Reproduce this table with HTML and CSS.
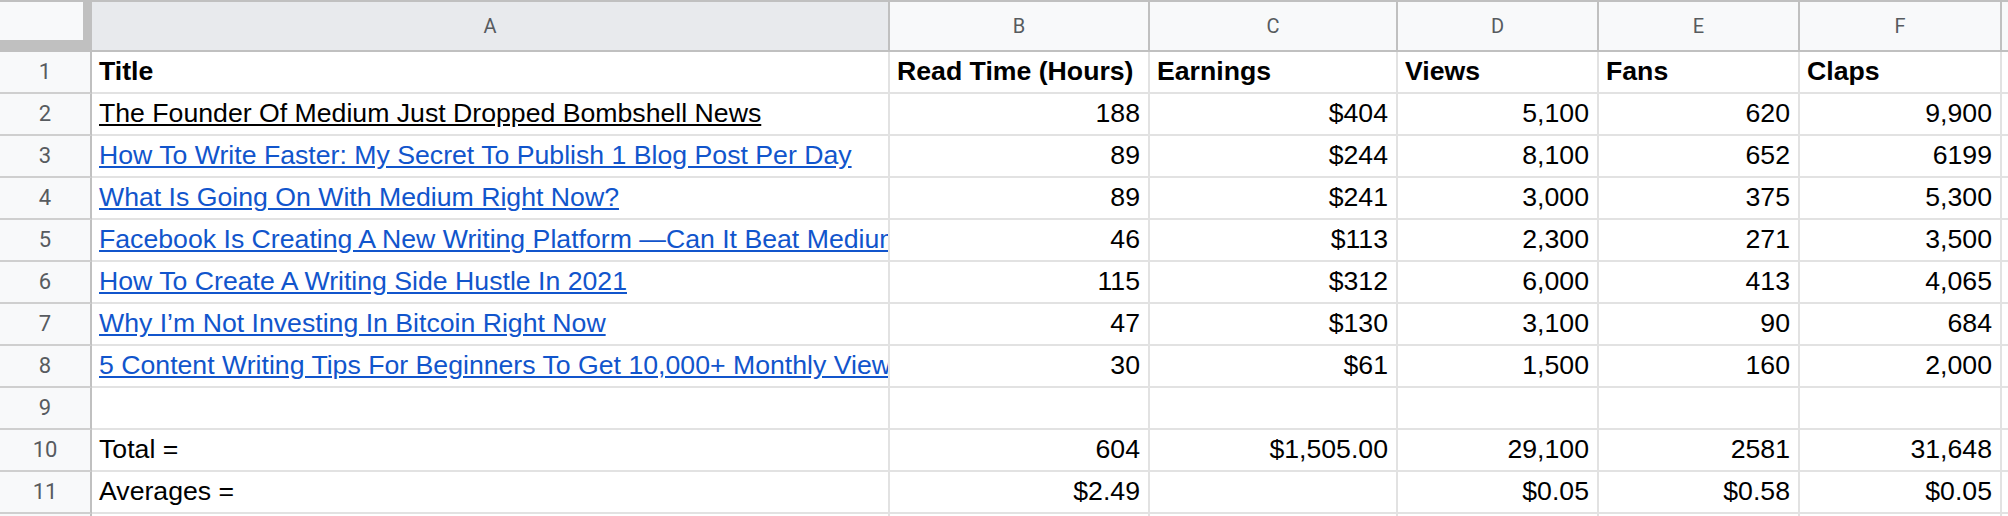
FILE: index.html
```html
<!DOCTYPE html>
<html>
<head>
<meta charset="utf-8">
<title>Sheet</title>
<link rel="stylesheet" href="styles.css">
</head>
<body>
<div class="sheet">
  <div class="corner"></div>
  <div class="colhead sel">A</div>
  <div class="colhead">B</div>
  <div class="colhead">C</div>
  <div class="colhead">D</div>
  <div class="colhead">E</div>
  <div class="colhead">F</div>
  <div class="colhead"></div>

  <div class="rowhead">1</div>
  <div class="cell bold">Title</div>
  <div class="cell bold">Read Time (Hours)</div>
  <div class="cell bold">Earnings</div>
  <div class="cell bold">Views</div>
  <div class="cell bold">Fans</div>
  <div class="cell bold">Claps</div>
  <div class="cell"></div>

  <div class="rowhead">2</div>
  <div class="cell"><a class="link dark" href="#">The Founder Of Medium Just Dropped Bombshell News</a></div>
  <div class="cell num">188</div>
  <div class="cell num">$404</div>
  <div class="cell num">5,100</div>
  <div class="cell num">620</div>
  <div class="cell num">9,900</div>
  <div class="cell"></div>

  <div class="rowhead">3</div>
  <div class="cell"><a class="link" href="#">How To Write Faster: My Secret To Publish 1 Blog Post Per Day</a></div>
  <div class="cell num">89</div>
  <div class="cell num">$244</div>
  <div class="cell num">8,100</div>
  <div class="cell num">652</div>
  <div class="cell num">6199</div>
  <div class="cell"></div>

  <div class="rowhead">4</div>
  <div class="cell"><a class="link" href="#">What Is Going On With Medium Right Now?</a></div>
  <div class="cell num">89</div>
  <div class="cell num">$241</div>
  <div class="cell num">3,000</div>
  <div class="cell num">375</div>
  <div class="cell num">5,300</div>
  <div class="cell"></div>

  <div class="rowhead">5</div>
  <div class="cell"><a class="link" href="#">Facebook Is Creating A New Writing Platform —Can It Beat Medium?</a></div>
  <div class="cell num">46</div>
  <div class="cell num">$113</div>
  <div class="cell num">2,300</div>
  <div class="cell num">271</div>
  <div class="cell num">3,500</div>
  <div class="cell"></div>

  <div class="rowhead">6</div>
  <div class="cell"><a class="link" href="#">How To Create A Writing Side Hustle In 2021</a></div>
  <div class="cell num">115</div>
  <div class="cell num">$312</div>
  <div class="cell num">6,000</div>
  <div class="cell num">413</div>
  <div class="cell num">4,065</div>
  <div class="cell"></div>

  <div class="rowhead">7</div>
  <div class="cell"><a class="link" href="#">Why I’m Not Investing In Bitcoin Right Now</a></div>
  <div class="cell num">47</div>
  <div class="cell num">$130</div>
  <div class="cell num">3,100</div>
  <div class="cell num">90</div>
  <div class="cell num">684</div>
  <div class="cell"></div>

  <div class="rowhead">8</div>
  <div class="cell"><a class="link" href="#">5 Content Writing Tips For Beginners To Get 10,000+ Monthly Views</a></div>
  <div class="cell num">30</div>
  <div class="cell num">$61</div>
  <div class="cell num">1,500</div>
  <div class="cell num">160</div>
  <div class="cell num">2,000</div>
  <div class="cell"></div>

  <div class="rowhead">9</div>
  <div class="cell"></div>
  <div class="cell"></div>
  <div class="cell"></div>
  <div class="cell"></div>
  <div class="cell"></div>
  <div class="cell"></div>
  <div class="cell"></div>

  <div class="rowhead">10</div>
  <div class="cell">Total =</div>
  <div class="cell num">604</div>
  <div class="cell num">$1,505.00</div>
  <div class="cell num">29,100</div>
  <div class="cell num">2581</div>
  <div class="cell num">31,648</div>
  <div class="cell"></div>

  <div class="rowhead">11</div>
  <div class="cell">Averages =</div>
  <div class="cell num">$2.49</div>
  <div class="cell num"></div>
  <div class="cell num">$0.05</div>
  <div class="cell num">$0.58</div>
  <div class="cell num">$0.05</div>
  <div class="cell"></div>

  <div class="rowhead"></div>
  <div class="cell"></div>
  <div class="cell"></div>
  <div class="cell"></div>
  <div class="cell"></div>
  <div class="cell"></div>
  <div class="cell"></div>
  <div class="cell"></div>
</div>
</body>
</html>
```

FILE: styles.css
```css
html, body {
  margin: 0;
  padding: 0;
  background: #ffffff;
  overflow: hidden;
}

.sheet {
  display: grid;
  grid-template-columns: 92px 798px 260px 248px 201px 201px 202px 1fr;
  grid-template-rows: 52px repeat(12, 42px);
  width: 2008px;
  height: 516px;
  overflow: hidden;
  font-family: "Liberation Sans", Arial, sans-serif;
}

.sheet > div {
  box-sizing: border-box;
  min-width: 0;
}

.corner {
  background: #f8f9fa;
  border-top: 2px solid #c0c0c0;
  border-right: 9px solid #c0c0c0;
  border-bottom: 12px solid #c0c0c0;
}

.colhead {
  background: #f8f9fa;
  border-top: 2px solid #c0c0c0;
  border-right: 2px solid #c0c0c0;
  border-bottom: 2px solid #c0c0c0;
  display: flex;
  align-items: center;
  justify-content: center;
  font-family: Roboto, "Liberation Sans", sans-serif;
  font-size: 20px;
  color: #575b5f;
}

.colhead.sel {
  background: #e8eaed;
}

.rowhead {
  background: #f8f9fa;
  border-right: 2px solid #c0c0c0;
  border-bottom: 2px solid #cfcfcf;
  text-align: center;
  line-height: 40px;
  font-family: Roboto, "Liberation Sans", sans-serif;
  font-size: 22px;
  color: #575b5f;
}

.cell {
  border-right: 2px solid #e2e2e2;
  border-bottom: 2px solid #e2e2e2;
  padding: 0 8px 0 7px;
  font-size: 26.67px;
  line-height: 38px;
  white-space: nowrap;
  overflow: hidden;
  color: #000000;
}

.bold {
  font-weight: bold;
}

.num {
  text-align: right;
}

.link {
  color: #1155cc;
  text-decoration: underline;
}

.link.dark {
  color: #000000;
}
```
